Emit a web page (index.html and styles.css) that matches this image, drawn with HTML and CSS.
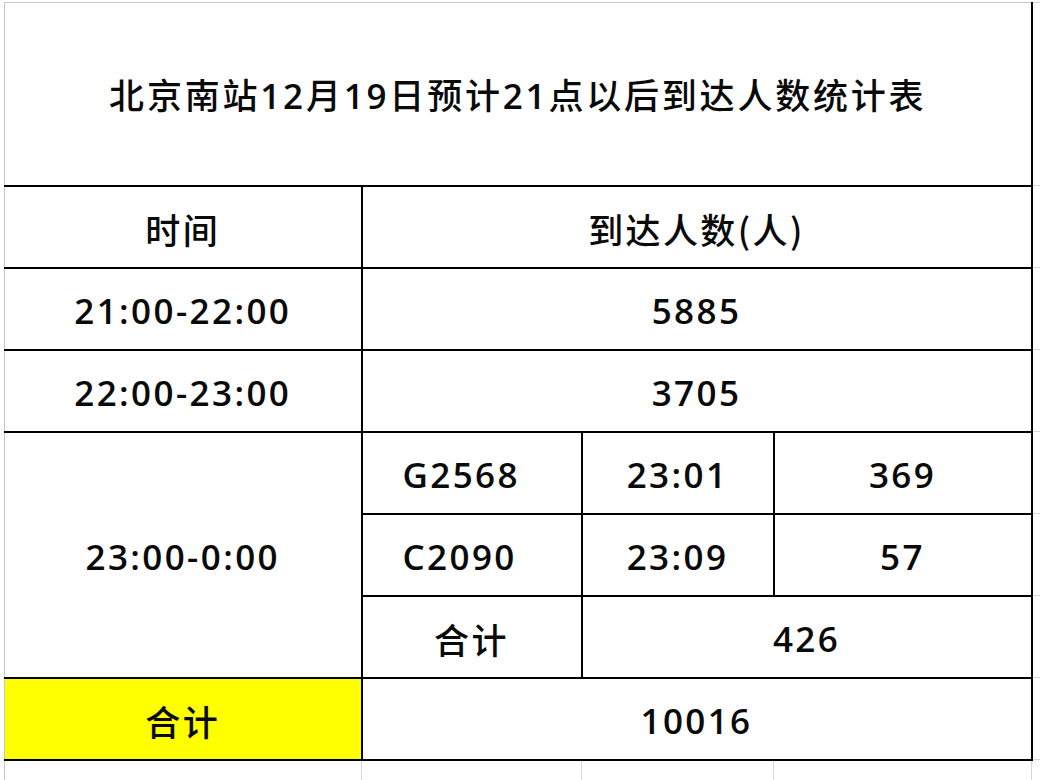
FILE: index.html
```html
<!DOCTYPE html>
<html lang="zh-CN">
<head>
<meta charset="utf-8">
<title>北京南站12月19日预计21点以后到达人数统计表</title>
<link rel="stylesheet" href="styles.css">
</head>
<body>
<div class="sheet">
<table class="stats">
<colgroup>
<col class="c1"><col class="c2"><col class="c3"><col class="c4"><col class="cx">
</colgroup>
<tbody>
<tr class="r-title">
<td class="title han edge-l edge-t" colspan="4">北京南站<span class="num">12</span>月<span class="num">19</span>日预计<span class="num">21</span>点以后到达人数统计表</td>
<td class="grid edge-t"></td>
</tr>
<tr class="r">
<td class="han edge-l">时间</td>
<td class="han" colspan="3">到达人数(人)</td>
<td class="grid"></td>
</tr>
<tr class="r">
<td class="edge-l">21:00-22:00</td>
<td colspan="3">5885</td>
<td class="grid"></td>
</tr>
<tr class="r">
<td class="edge-l">22:00-23:00</td>
<td colspan="3">3705</td>
<td class="grid"></td>
</tr>
<tr class="r">
<td class="edge-l" rowspan="3">23:00-0:00</td>
<td class="train">G2568</td>
<td>23:01</td>
<td>369</td>
<td class="grid"></td>
</tr>
<tr class="r">
<td class="train">C2090</td>
<td>23:09</td>
<td>57</td>
<td class="grid"></td>
</tr>
<tr class="r">
<td class="han">合计</td>
<td colspan="2">426</td>
<td class="grid"></td>
</tr>
<tr class="r">
<td class="han edge-l total">合计</td>
<td colspan="3">10016</td>
<td class="grid"></td>
</tr>
<tr class="r-empty">
<td class="grid edge-l"></td>
<td class="grid"></td>
<td class="grid"></td>
<td class="grid"></td>
<td class="grid"></td>
</tr>
</tbody>
</table>
</div>
</body>
</html>
```

FILE: styles.css
```css
html, body {
  margin: 0;
  padding: 0;
  background: #ffffff;
}

.sheet {
  padding: 2px 0 0 4px;
  width: 1036px;
  height: 778px;
  overflow: hidden;
}

.stats {
  border-collapse: collapse;
  table-layout: fixed;
  width: 1036px;
  font-family: "Open Sans", "Noto Sans CJK SC", sans-serif;
  font-size: 35px;
  font-weight: 600;
  color: #0a0a0a;
  letter-spacing: 2.4px;
}

.c1 { width: 357px; }
.c2 { width: 220px; }
.c3 { width: 192px; }
.c4 { width: 258px; }
.cx { width: 9px; }

.stats td {
  border: 2px solid #000;
  padding: 4px 0 0 0;
  text-align: center;
  vertical-align: middle;
  white-space: nowrap;
  background: #fff;
  line-height: 1.3;
}

.stats td.han {
  font-family: "Noto Sans CJK SC", sans-serif;
  font-weight: 500;
}

.stats td.han .num {
  font-family: "Open Sans", "Noto Sans CJK SC", sans-serif;
  font-weight: 600;
}

.r-title { height: 183px; }
.r { height: 82px; }
.r-empty { height: 22px; }

.stats td.title {
  letter-spacing: 2.8px;
  padding-top: 2px;
}

.stats td.edge-l { border-left: 1px solid #c6c6c6; }
.stats td.edge-t { border-top: 1px solid #c6c6c6; }

.stats td.train {
  text-align: left;
  padding-left: 40px;
}

.stats td.total { background: #ffff00; }

.stats td.grid {
  border: 1px solid #d6d6d6;
  padding: 0;
}

.r-empty td.grid {
  border-bottom: none;
}
.r-empty td.grid.edge-l {
  border-left: 1px solid #c6c6c6;
}
```
